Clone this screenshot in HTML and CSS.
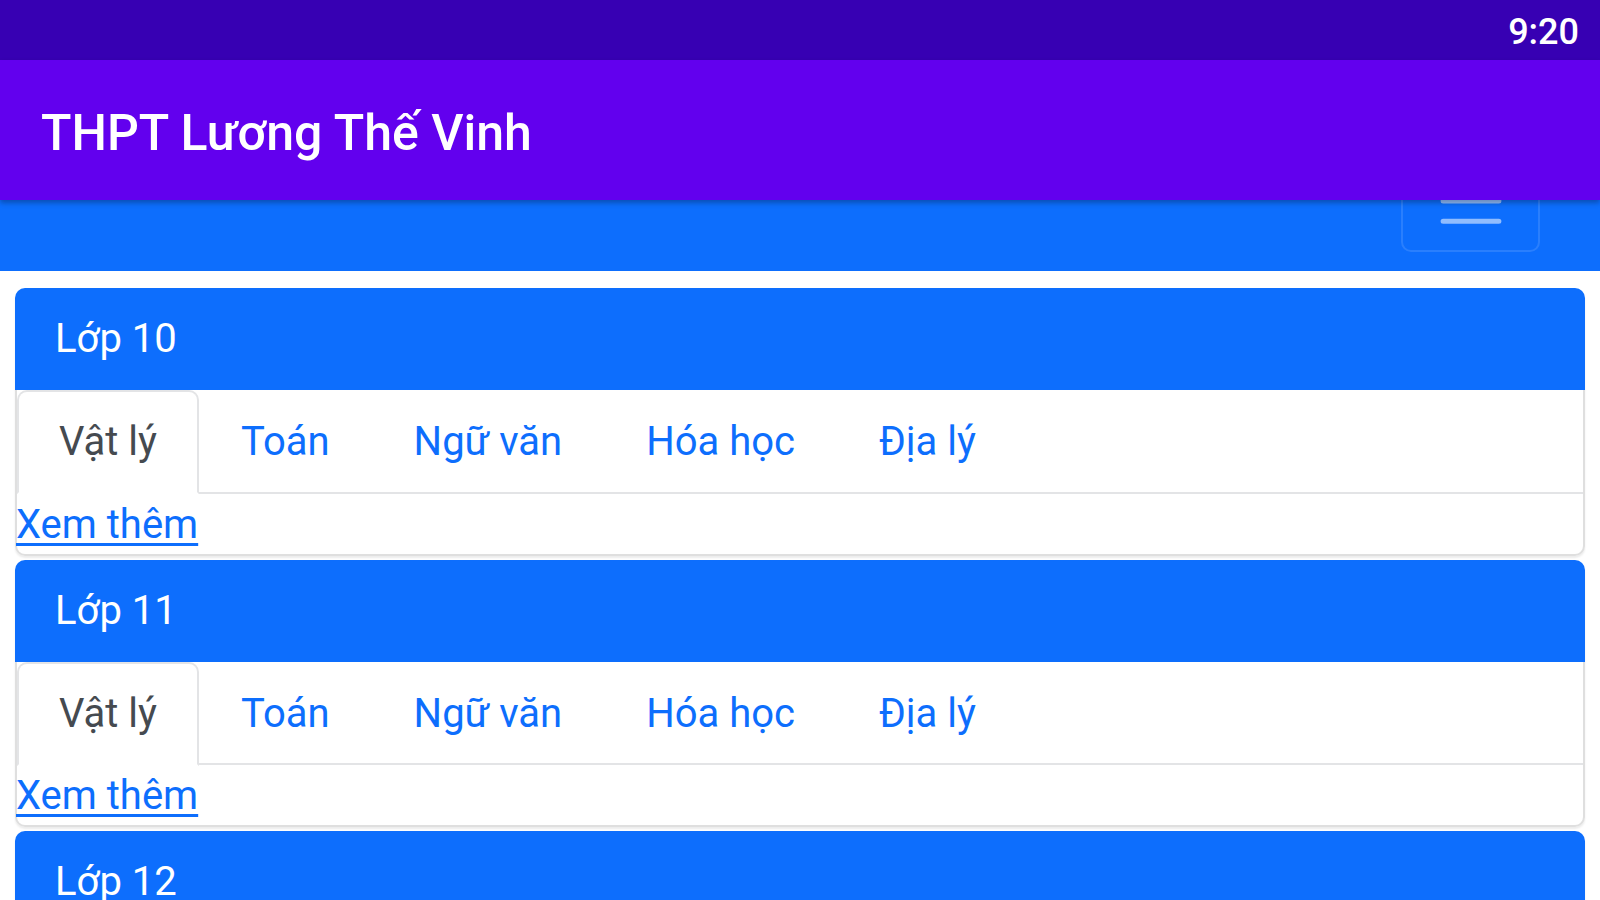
FILE: index.html
```html
<!DOCTYPE html>
<html lang="vi">
<head>
<meta charset="utf-8">
<title>THPT Lương Thế Vinh</title>
<link rel="stylesheet" href="styles.css">
</head>
<body>
<div class="phone">
  <div class="status-bar"><span class="time">9:20</span></div>
  <header class="app-bar"><h1 class="app-title">THPT Lương Thế Vinh</h1></header>
  <main class="webview">
    <nav class="navbar">
      <button class="toggler" type="button" aria-label="Menu">
        <svg class="toggler-icon" viewBox="0 0 30 30" width="76" height="76">
          <path d="M4 7h22M4 15h22M4 23h22" stroke="rgba(255,255,255,0.55)" stroke-width="2" stroke-linecap="round"/>
        </svg>
      </button>
    </nav>
    <div class="cards">
      <section class="card">
        <div class="card-header">Lớp 10</div>
        <div class="card-body">
          <ul class="tabs">
            <li class="tab active">Vật lý</li>
            <li class="tab">Toán</li>
            <li class="tab">Ngữ văn</li>
            <li class="tab">Hóa học</li>
            <li class="tab">Địa lý</li>
          </ul>
          <a class="more" href="#">Xem thêm</a>
        </div>
      </section>
      <section class="card">
        <div class="card-header">Lớp 11</div>
        <div class="card-body">
          <ul class="tabs">
            <li class="tab active">Vật lý</li>
            <li class="tab">Toán</li>
            <li class="tab">Ngữ văn</li>
            <li class="tab">Hóa học</li>
            <li class="tab">Địa lý</li>
          </ul>
          <a class="more" href="#">Xem thêm</a>
        </div>
      </section>
      <section class="card">
        <div class="card-header">Lớp 12</div>
      </section>
    </div>
  </main>
</div>
</body>
</html>
```
FILE: styles.css
```css
* { box-sizing: border-box; }
html, body {
  margin: 0;
  padding: 0;
  width: 1600px;
  height: 900px;
  overflow: hidden;
  background: #ffffff;
  font-family: Roboto, "Noto Sans", "Liberation Sans", sans-serif;
}
.phone {
  display: flex;
  flex-direction: column;
  height: 900px;
}
.status-bar {
  height: 60px;
  background: #3700b3;
  display: flex;
  align-items: center;
  justify-content: flex-end;
  padding: 3px 21px 0 0;
  flex-shrink: 0;
}
.time {
  color: #ffffff;
  font-size: 36px;
  font-weight: 500;
}
.app-bar {
  height: 140px;
  background: #6200ee;
  display: flex;
  align-items: center;
  padding: 6px 0 0 41px;
  flex-shrink: 0;
  position: relative;
  z-index: 2;
  box-shadow: 0 3px 5px rgba(0, 0, 0, 0.28);
}
.app-title {
  margin: 0;
  color: #ffffff;
  font-size: 50px;
  font-weight: 500;
}
.webview {
  flex: 1;
  overflow: hidden;
}
.navbar {
  height: 71px;
  background: #0d6efd;
  display: flex;
  align-items: flex-end;
  justify-content: flex-end;
  padding: 0 60px 19px 0;
  overflow: hidden;
}
.toggler {
  flex-shrink: 0;
  width: 139px;
  height: 102px;
  background: transparent;
  border: 2.5px solid rgba(255, 255, 255, 0.12);
  border-radius: 10px;
  padding: 10px 29px;
  display: flex;
  align-items: center;
  justify-content: center;
}
.toggler-icon { display: block; }
.cards {
  padding: 17px 15px 0;
  display: flex;
  flex-direction: column;
  gap: 4px;
}
.card {
  border-radius: 10px;
  box-shadow: 0 2px 2px rgba(0, 0, 0, 0.08);
  flex-shrink: 0;
}
.card-header {
  background: #0d6efd;
  color: #ffffff;
  font-size: 40px;
  line-height: 60px;
  padding: 21px 41px 21px 40px;
  border-radius: 10px 10px 0 0;
}
.card-body {
  border: 2.5px solid #dfdfdf;
  border-top: none;
  border-radius: 0 0 10px 10px;
  display: flex;
  flex-direction: column;
  align-items: flex-start;
}
.tabs {
  list-style: none;
  margin: 0;
  padding: 0;
  display: flex;
  align-self: stretch;
  border-bottom: 2.5px solid #e3e4e6;
}
.tab {
  font-size: 40px;
  line-height: 60px;
  padding: 20px 40px;
  border: 2.5px solid transparent;
  margin-bottom: -2.5px;
  color: #0d6efd;
  border-radius: 10px 10px 0 0;
}
.tab.active {
  color: #454a50;
  background: #ffffff;
  border-color: #e3e4e6 #e3e4e6 #ffffff;
}
.more {
  font-size: 40px;
  line-height: 58px;
  color: #0d6efd;
  text-decoration: underline;
  text-decoration-thickness: 2.5px;
  text-underline-offset: 5px;
  margin-left: -1px;
  padding-top: 2px;
}
```
